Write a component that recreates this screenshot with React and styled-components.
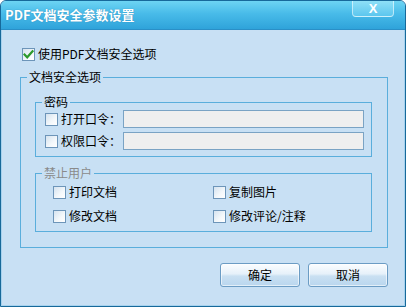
import React from 'react';
import styled, { createGlobalStyle } from 'styled-components';

const Global = createGlobalStyle`
  html, body { margin: 0; padding: 0; background: #ffffff; }
  body { font-family: "Noto Sans CJK SC", "Noto Sans", sans-serif; font-size: 12px; }
  * { box-sizing: border-box; }
`;

const Window = styled.div`
  width: 406px;
  height: 307px;
  display: flex;
  flex-direction: column;
  background: #c8e0f4;
  border: 1px solid #17699a;
  border-radius: 6px 6px 0 0;
  overflow: hidden;
  box-shadow: inset 1px 0 0 #a6d2ee, inset -1px 0 0 #a6d2ee, inset 0 -1px 0 #a6d2ee;
`;

const TitleBar = styled.div`
  height: 29px;
  flex: none;
  display: flex;
  justify-content: space-between;
  align-items: flex-start;
  background: linear-gradient(#6dd4f3 0%, #48bbe9 45%, #2fa3da 100%);
  border-bottom: 1px solid #2a8fc7;
`;

const Title = styled.div`
  padding-left: 4px;
  line-height: 28px;
  font-size: 13px;
  font-weight: bold;
  color: #ffffff;
  text-shadow: 0 0 1px rgba(0, 70, 120, 0.5);
`;

const CloseButton = styled.div`
  width: 42px;
  height: 16px;
  margin-right: 11px;
  display: flex;
  align-items: center;
  justify-content: center;
  border: 1px solid rgba(255, 255, 255, 0.55);
  border-top: none;
  border-radius: 0 0 4px 4px;
  background: linear-gradient(#8ee0f7, #5cc6ee);
  color: #ffffff;
  font-family: "Liberation Sans", Arial, sans-serif;
  font-weight: bold;
  font-size: 13px;
  line-height: 14px;
`;

const Body = styled.div`
  flex: 1;
  display: flex;
  flex-direction: column;
  padding: 17px 17px 0 19px;
  color: #000000;
`;

const CheckRow = styled.label`
  display: flex;
  align-items: center;
  gap: 3px;
  height: ${p => p.$h || 14}px;
  line-height: 14px;
  margin-left: ${p => p.$indent || 0}px;
  white-space: nowrap;
`;

const Box = styled.span`
  width: 13px;
  height: 13px;
  flex: none;
  display: inline-flex;
  align-items: center;
  justify-content: center;
  border: 1px solid #6d95b9;
  background: linear-gradient(135deg, #d5e3ef 0%, #f4f8fb 60%, #ffffff 100%);
`;

const Group = styled.fieldset`
  margin: ${p => p.$margin || '0'};
  padding: 0;
  border: 1px solid #5aaedc;
  min-inline-size: 0;
`;

const Legend = styled.legend`
  margin-left: 6px;
  padding: 0 2px;
  line-height: 14px;
  font-size: 12px;
  color: ${p => (p.$disabled ? '#8a8a8a' : '#000000')};
`;

const GroupBody = styled.div`
  display: flex;
  flex-direction: column;
  padding: ${p => p.$pad};
  gap: ${p => p.$gap || 0}px;
`;

const FieldRow = styled.div`
  display: flex;
  align-items: center;
  height: 18px;
`;

const TextField = styled.div`
  flex: 1;
  height: 18px;
  margin-left: 2px;
  border: 1px solid #7aa3c4;
  background: #efefef;
`;

const OptionGrid = styled.div`
  display: grid;
  grid-template-columns: 160px 1fr;
  row-gap: 10px;
  padding: 5px 0 8px 17px;
`;

const ButtonRow = styled.div`
  display: flex;
  justify-content: flex-end;
  gap: 8px;
  margin-top: 15px;
`;

const Button = styled.div`
  width: 80px;
  height: 24px;
  display: flex;
  align-items: center;
  justify-content: center;
  border: 1px solid #6b9cc4;
  border-radius: 3px;
  background: linear-gradient(#fbfdff 0%, #e6f1fa 45%, #c9e0f2 55%, #b9d6ee 100%);
  box-shadow: inset 0 0 0 1px rgba(255, 255, 255, 0.6);
  font-size: 12px;
  line-height: 14px;
`;

const Check = () => (
  <svg width="11" height="11" viewBox="0 0 11 11">
    <polyline points="1.5,5.5 4.2,8.3 9.5,2.2" fill="none" stroke="#2c9a2c" strokeWidth="2.2" strokeLinecap="square" />
  </svg>
);

const CheckBox = ({ checked, children, indent }) => (
  <CheckRow $indent={indent}>
    <Box>{checked && <Check />}</Box>
    <span>{children}</span>
  </CheckRow>
);

export default function App() {
  return (
    <>
      <Global />
      <Window>
        <TitleBar>
          <Title>PDF文档安全参数设置</Title>
          <CloseButton>X</CloseButton>
        </TitleBar>
        <Body>
          <CheckBox checked indent={2}>使用PDF文档安全选项</CheckBox>
          <Group $margin="9px 0 0 0">
            <Legend>文档安全选项</Legend>
            <GroupBody $pad="0 15px 15px 14px">
              <Group $margin="11px 0 0 0">
                <Legend>密码</Legend>
                <GroupBody $pad="1px 7px 6px 9px" $gap={4}>
                  <FieldRow>
                    <CheckBox>打开口令：</CheckBox>
                    <TextField />
                  </FieldRow>
                  <FieldRow>
                    <CheckBox>权限口令：</CheckBox>
                    <TextField />
                  </FieldRow>
                </GroupBody>
              </Group>
              <Group $margin="9px 0 0 0">
                <Legend $disabled>禁止用户</Legend>
                <OptionGrid>
                  <CheckBox>打印文档</CheckBox>
                  <CheckBox>复制图片</CheckBox>
                  <CheckBox>修改文档</CheckBox>
                  <CheckBox>修改评论/注释</CheckBox>
                </OptionGrid>
              </Group>
            </GroupBody>
          </Group>
          <ButtonRow>
            <Button>确定</Button>
            <Button>取消</Button>
          </ButtonRow>
        </Body>
      </Window>
    </>
  );
}
